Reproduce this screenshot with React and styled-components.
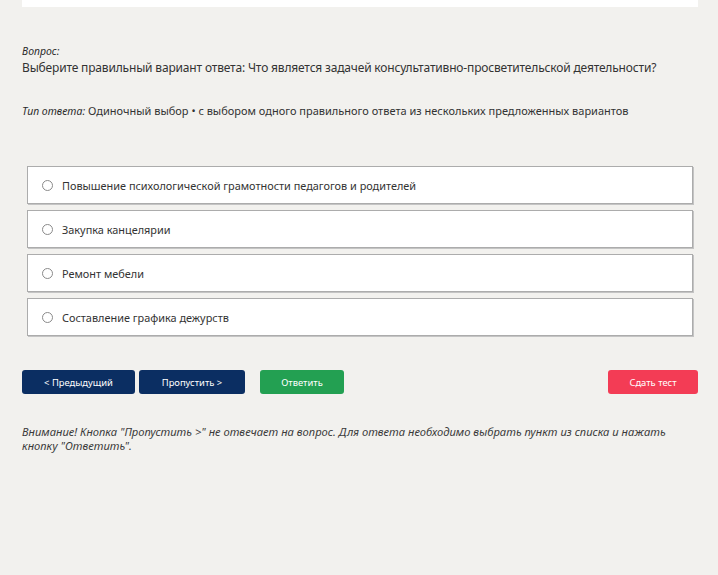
import React from "react";
import styled, { createGlobalStyle } from "styled-components";

const GlobalStyle = createGlobalStyle`
  body {
    margin: 0;
    background: #f2f1ee;
    font-family: "Noto Sans", "Open Sans", sans-serif;
    color: #333;
  }
`;

const options = [
  "Повышение психологической грамотности педагогов и родителей",
  "Закупка канцелярии",
  "Ремонт мебели",
  "Составление графика дежурств",
];

function App() {
  return (
    <>
      <GlobalStyle />
      <Page>
        <TopBar />
        <Question>
          <Label>Вопрос:</Label>
          <QuestionText>
            Выберите правильный вариант ответа: Что является задачей
            консультативно-просветительской деятельности?
          </QuestionText>
        </Question>
        <AnswerType>
          <Label>Тип ответа:</Label> Одиночный выбор • с выбором одного
          правильного ответа из нескольких предложенных вариантов
        </AnswerType>
        <Options>
          {options.map((text, i) => (
            <Option key={i}>
              <Radio />
              {text}
            </Option>
          ))}
        </Options>
        <Actions>
          <Button $color="#0b2e62" $width={113}>
            &lt; Предыдущий
          </Button>
          <Button $color="#0b2e62" $width={106}>
            Пропустить &gt;
          </Button>
          <Button $color="#23a052" $width={84} $gap={11}>
            Ответить
          </Button>
          <Spacer />
          <Button $color="#f33c55" $width={90}>
            Сдать тест
          </Button>
        </Actions>
        <Warning>
          Внимание! Кнопка "Пропустить &gt;" не отвечает на вопрос. Для ответа
          необходимо выбрать пункт из списка и нажать кнопку "Ответить".
        </Warning>
      </Page>
    </>
  );
}

const Page = styled.div`
  padding: 0 20px 0 22px;
`;

const TopBar = styled.div`
  height: 7px;
  background: #fff;
`;

const Question = styled.div`
  margin-top: 35px;
  line-height: 15px;
`;

const Label = styled.span`
  font-style: italic;
  font-size: 10.5px;
  color: #2a2a2a;
`;

const QuestionText = styled.div`
  font-size: 12px;
  letter-spacing: -0.17px;
  margin-top: 1px;
  white-space: nowrap;
`;

const AnswerType = styled.div`
  margin-top: 28px;
  font-size: 11px;
  line-height: 15px;
`;

const Options = styled.div`
  margin: 47px 5px 0;
  display: flex;
  flex-direction: column;
  gap: 6px;
`;

const Option = styled.label`
  display: flex;
  align-items: center;
  gap: 9px;
  height: 38px;
  box-sizing: border-box;
  padding-left: 14px;
  background: #fff;
  border: 1px solid #acacac;
  box-shadow: 1px 1px 0 #c4c4c4;
  font-size: 10.9px;
  color: #333;
`;

const Radio = styled.span`
  width: 11px;
  height: 11px;
  border-radius: 50%;
  border: 1px solid #8a8a8a;
  box-sizing: border-box;
`;

const Actions = styled.div`
  display: flex;
  gap: 4px;
  margin-top: 34px;
`;

const Spacer = styled.div`
  flex: 1;
`;

const Button = styled.button`
  width: ${(p) => p.$width}px;
  height: 24px;
  margin-left: ${(p) => p.$gap || 0}px;
  border: none;
  border-radius: 3px;
  background: ${(p) => p.$color};
  color: #fff;
  font-family: "Noto Sans", sans-serif;
  font-size: 9.4px;
  padding: 0;
`;

const Warning = styled.p`
  margin: 31px 0 0;
  max-width: 665px;
  font-style: italic;
  font-size: 11.2px;
  line-height: 14px;
  color: #3a3a3a;
`;

export default App;
